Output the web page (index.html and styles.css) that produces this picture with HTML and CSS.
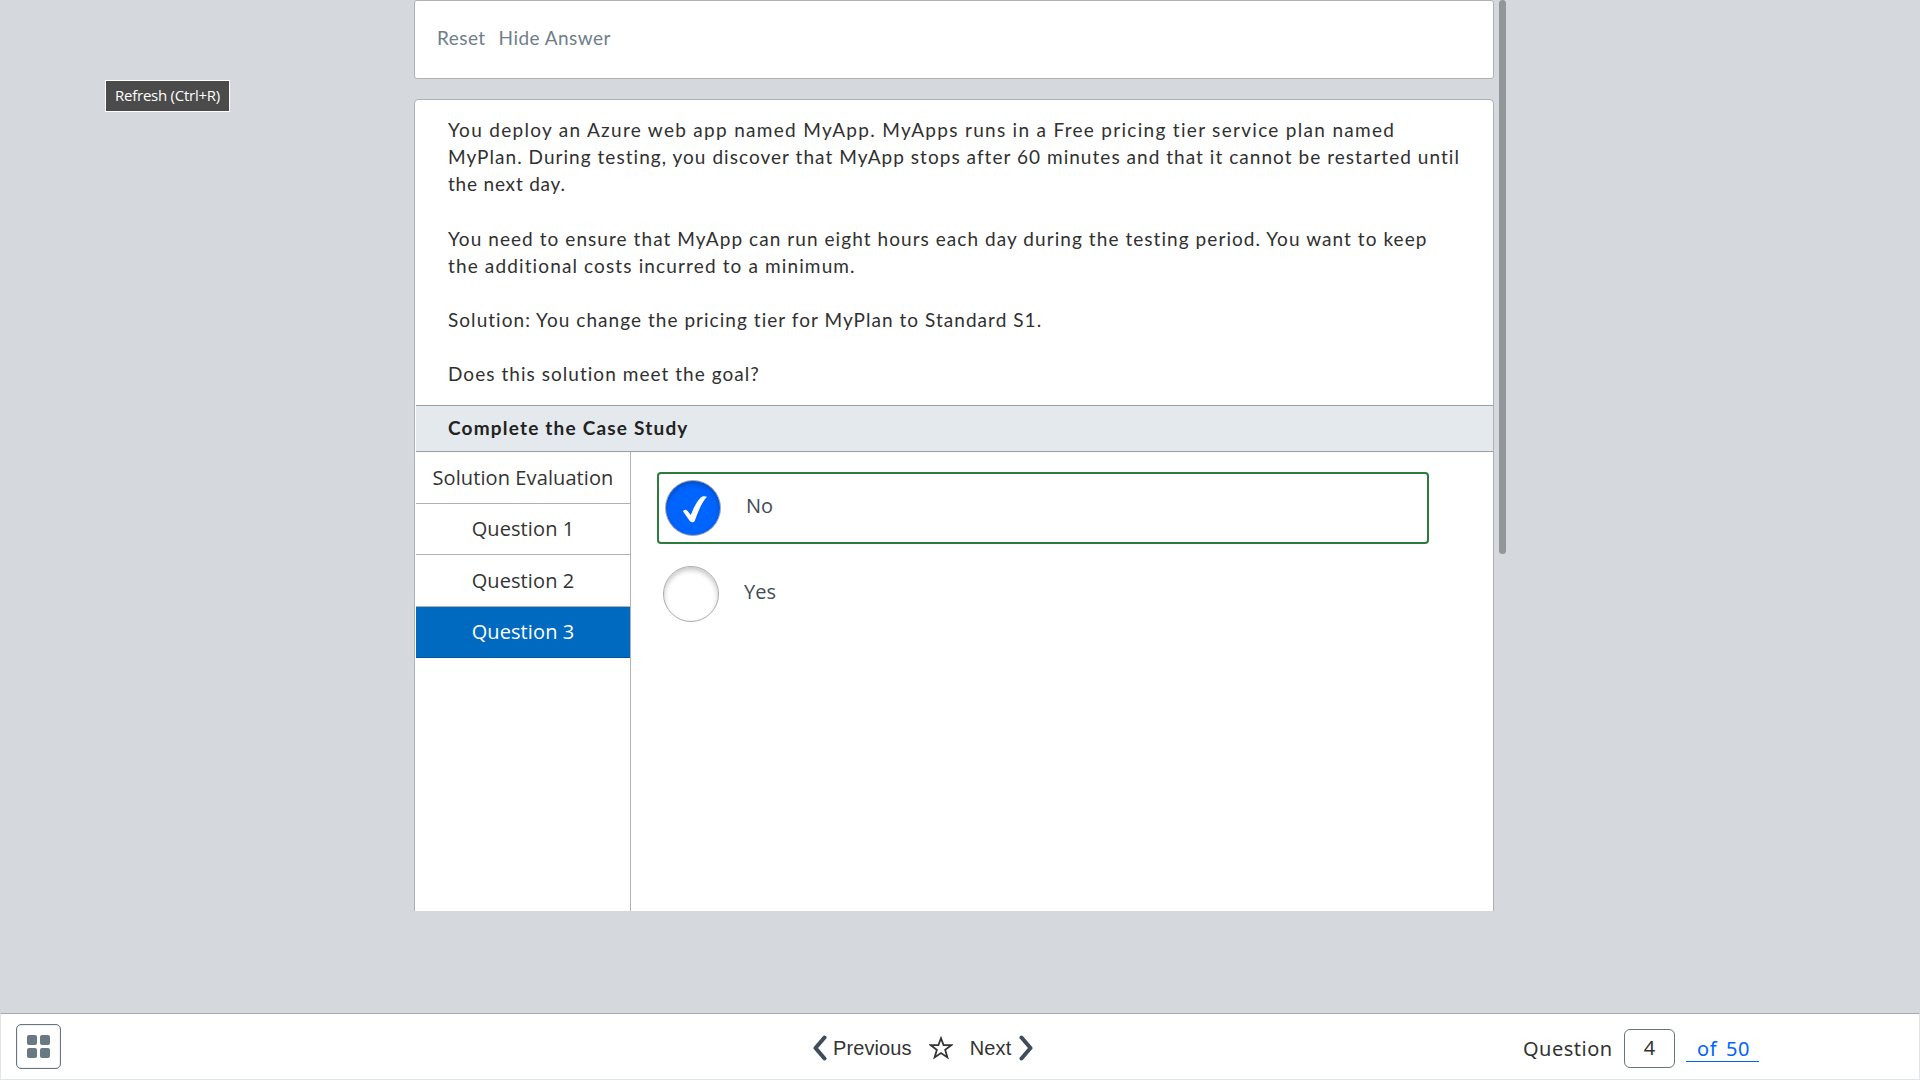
FILE: index.html
```html
<!DOCTYPE html>
<html lang="en">
<head>
<meta charset="utf-8">
<title>Practice Test</title>
<link rel="stylesheet" href="styles.css">
</head>
<body>
<main class="viewport">
  <div class="column">
    <nav class="toolbar"><a>Reset</a><a class="hide">Hide Answer</a></nav>
    <section class="card">
      <div class="prompt">
        <p class="lead"><span class="l1">You deploy an Azure web app named MyApp. MyApps runs in a Free pricing tier service plan named</span><br><span class="l2">MyPlan. During testing, you discover that MyApp stops after 60 minutes and that it cannot be restarted until</span><br><span class="l3">the next day.</span></p>
        <p><span class="l4">You need to ensure that MyApp can run eight hours each day during the testing period. You want to keep</span><br><span class="l5">the additional costs incurred to a minimum.</span></p>
        <p><span class="l6">Solution: You change the pricing tier for MyPlan to Standard S1.</span></p>
        <p><span class="l7">Does this solution meet the goal?</span></p>
      </div>
      <h2 class="band"><span>Complete the Case Study</span></h2>
      <div class="study">
        <ul class="tabs">
          <li class="first">Solution Evaluation</li>
          <li>Question 1</li>
          <li class="tall">Question 2</li>
          <li class="active">Question 3</li>
        </ul>
        <div class="options">
          <div class="option correct"><span class="radio checked"><svg width="26" height="28" viewBox="0 0 26 28"><path d="M2 16.2C3.2 14.6 5 14.3 6.3 15.8L9.8 20C12.5 13 17 4 21 1.8C22.6 1 24.7 1.2 26 1.8C20.5 7.5 17.3 16.5 13.9 25.5C13 27.8 9.9 27.8 8.6 25.8Z" fill="#fff"/></svg></span><span>No</span></div>
          <div class="option"><span class="radio"></span><span>Yes</span></div>
        </div>
      </div>
    </section>
  </div>
  <div class="scrollbar"></div>
</main>
<footer class="footer">
  <button class="grid"><i></i><i></i><i></i><i></i></button>
  <div class="pager">
    <svg width="14" height="26" viewBox="0 0 14 26"><path d="M11.5 2.5L2.5 13L11.5 23.5" /></svg>
    <span class="prev">Previous</span>
    <svg class="star" width="24" height="24" viewBox="0 0 24 24"><path d="M12 2.2L14.6 9.2H22.2L16.2 13.9L18.4 21.4L12 17.1L5.6 21.4L7.8 13.9L1.8 9.2H9.4Z"/></svg>
    <span class="next">Next</span>
    <svg width="14" height="26" viewBox="0 0 14 26"><path d="M2.5 2.5L11.5 13L2.5 23.5"/></svg>
  </div>
  <div class="position"><span class="word">Question</span><span class="number">4</span><a class="total">of 50</a></div>
</footer>
<div class="tooltip">Refresh (Ctrl+R)</div>
</body>
</html>
```
FILE: styles.css
```css
* { box-sizing: border-box; }
body { margin: 0; width: 1920px; height: 1080px; overflow: hidden; background: #d5d9de; display: flex; flex-direction: column; font-family: "Open Sans", sans-serif; color: #333; }
.viewport { height: 1013px; display: flex; gap: 5px; padding-left: 414px; }
.column { width: 1080px; height: 911px; display: flex; flex-direction: column; gap: 20px; }
.toolbar { height: 79px; flex: none; background: #fff; border: 1px solid #afb1b3; border-radius: 3px; padding: 23px 22px; display: flex; gap: 13px; font: 19px/27px Lato, sans-serif; color: #6f7e89; letter-spacing: .45px; }
.card { height: 812px; background: #fff; border: 1px solid #afb1b3; border-bottom: 0; border-radius: 5px 5px 0 0; }
.prompt { height: 305px; padding: 16px 0 0 33px; font: 19px/27px Lato, sans-serif; color: #303030; white-space: nowrap; }
.prompt p { margin: 0 0 27px; }
.prompt .lead { margin-bottom: 28px; }
.l1 { letter-spacing: 1.3px; }
.l2, .l6, .l7 { letter-spacing: 1.04px; }
.l3 { letter-spacing: .8px; }
.l4 { letter-spacing: 1.06px; }
.l5 { letter-spacing: 1.13px; }
.band { height: 47px; margin: 0 0 0 1px; padding: 0 0 2px 32px; background: #e4e9ed; border: solid #979fa4; border-width: 1px 0; display: flex; align-items: center; font: bold 19px/27px Lato, sans-serif; color: #222; letter-spacing: 1.2px; }
.study { height: 459px; display: flex; padding-left: 1px; }
.tabs { width: 215px; list-style: none; margin: 0; padding: 0; border-right: 1px solid #afb1b3; font-size: 20px; line-height: 27px; letter-spacing: .1px; text-align: center; }
.tabs li { height: 51px; padding-bottom: 2px; display: flex; justify-content: center; align-items: center; border-bottom: 1px solid #afb1b3; }
.tabs .first, .tabs .tall { height: 52px; padding-bottom: 0; }
.tabs .active { background: #006ac1; color: #fff; border-color: #00559c; }
.options { display: flex; flex-direction: column; gap: 14px; padding: 20px 0 0 26px; color: #434b57; font-size: 20px; }
.option { width: 772px; height: 72px; display: flex; align-items: center; gap: 25px; padding-left: 6px; line-height: 27px; }
.option > span:last-child { margin-top: -6px; }
.correct { border: 2px solid #2a7d3f; border-radius: 4px; }
.radio { width: 56px; height: 56px; border: 1px solid #aaa; border-radius: 50%; box-shadow: inset 0 3px 5px rgba(0,0,0,.22); display: flex; justify-content: center; align-items: center; }
.checked { background: #0064ff; }
.checked svg { margin: 1px 0 0 1px; }
.scrollbar { width: 7px; height: 554px; border-radius: 4px; background: #919699; }
.footer { height: 67px; flex: none; background: #fff; border: 1px solid #e2e3e4; border-top-color: #a5a9ad; display: flex; align-items: center; }
.grid { width: 45px; height: 45px; margin-left: 15px; padding: 10px; background: #fff; border: 1px solid #667681; border-radius: 5px; display: grid; grid-template-columns: 10px 10px; grid-auto-rows: 10px; gap: 3px; box-shadow: inset 0 0 1px #667681; }
.grid i { background: #697984; border-radius: 2px; }
.pager { width: 221px; flex: none; display: flex; align-items: center; margin: 3px 0 0 752px; font: 20px/24px "Liberation Sans", sans-serif; }
.pager path { fill: none; stroke: #404c57; stroke-width: 4; stroke-linecap: round; stroke-linejoin: round; }
.pager .star { margin: 0 17px; }
.pager .star path { stroke: #333; stroke-width: 1.8; stroke-linejoin: miter; }
.prev { margin-left: 6px; letter-spacing: .1px; }
.next { margin-right: 7px; letter-spacing: .2px; }
.position { display: flex; align-items: center; margin: 3px 0 0 489px; font: 20px/28px "Noto Sans", sans-serif; }
.word { width: 101px; letter-spacing: .5px; padding-top: 1px; }
.number { width: 51px; height: 39px; margin-right: 11px; border: 1px solid #667681; border-radius: 6px; display: flex; align-items: center; justify-content: center; }
.total { width: 73px; height: 28px; padding-left: 11px; border-bottom: 1px solid #0064ff; color: #0064ff; line-height: 30px; letter-spacing: .6px; word-spacing: 3px; }
.tooltip { position: absolute; left: 105px; top: 80px; width: 125px; height: 32px; border: 1px solid #fff; background: #4b4b4b; color: #fff; font: 15px/29px "Open Sans", sans-serif; letter-spacing: -.25px; text-align: center; white-space: nowrap; }
```
